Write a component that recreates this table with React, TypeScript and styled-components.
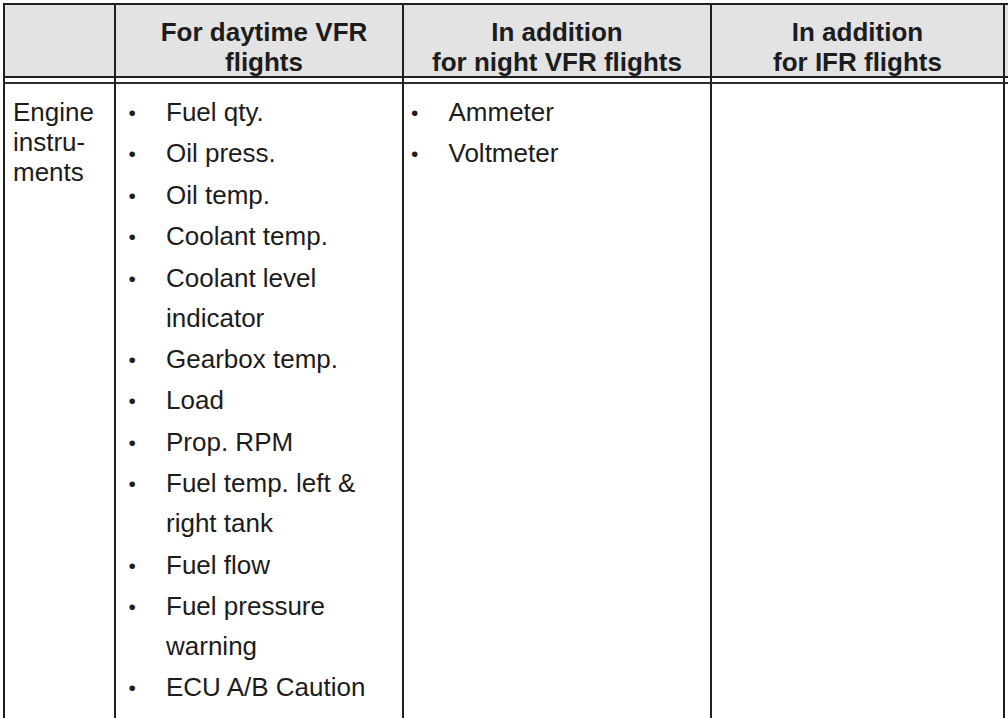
import React from 'react'
import styled, { createGlobalStyle } from 'styled-components'

const Global = createGlobalStyle`
  html, body {
    margin: 0;
    padding: 0;
    background: #fff;
    overflow: hidden;
  }
  body {
    font-family: "Liberation Sans", Arial, sans-serif;
    color: #1c1c1c;
  }
`

const LINE = '#1f1f1f'

const Page = styled.div`
  width: 1008px;
  height: 718px;
  overflow: hidden;
  padding: 3px 0 0 3px;
  box-sizing: border-box;
`

const Table = styled.div`
  display: grid;
  grid-template-columns: 111px 288px 308px 293px 200px;
  grid-template-rows: 73px 4px 700px;
  border-left: 2px solid ${LINE};
  border-top: 2px solid ${LINE};
  width: max-content;
`

const HeadCell = styled.div<{ $shift?: number }>`
  box-sizing: border-box;
  background: #e3e3e3;
  border-right: 2px solid ${LINE};
  border-bottom: 2px solid ${LINE};
  padding: 12px 4px 0 ${p => 4 + (p.$shift || 0)}px;
  font-size: 26px;
  line-height: 30px;
  font-weight: bold;
  text-align: center;
  white-space: nowrap;
`

const GapCell = styled.div`
  border-right: 2px solid ${LINE};
  background: #fff;
`

const BodyCell = styled.div<{ $indent?: number }>`
  box-sizing: border-box;
  border-right: 2px solid ${LINE};
  border-top: 2px solid #2e2e2e;
  padding: 8px 2px 0 ${p => p.$indent || 0}px;
  font-size: 26px;
  line-height: 40px;
`

const RowLabel = styled(BodyCell)`
  padding: 13px 2px 0 8px;
  line-height: 30px;
`

const List = styled.ul`
  list-style: none;
  margin: 0;
  padding: 0;
  display: flex;
  flex-direction: column;
  gap: 1.4px;
`

const Item = styled.li`
  display: flex;
  align-items: flex-start;
`

const Bullet = styled.span`
  flex: 0 0 38.5px;
  box-sizing: border-box;
  height: 40px;
  padding: 2px 0 0 1px;
  font-size: 21px;
  line-height: 38px;
`

const ItemText = styled.span`
  flex: 1;
`

const daytime = [
  'Fuel qty.',
  'Oil press.',
  'Oil temp.',
  'Coolant temp.',
  'Coolant level indicator',
  'Gearbox temp.',
  'Load',
  'Prop. RPM',
  'Fuel temp. left & right tank',
  'Fuel flow',
  'Fuel pressure warning',
  'ECU A/B Caution',
]

const night = ['Ammeter', 'Voltmeter']

function Bullets({ items }: { items: string[] }) {
  return (
    <List>
      {items.map(i => (
        <Item key={i}>
          <Bullet>•</Bullet>
          <ItemText>{i}</ItemText>
        </Item>
      ))}
    </List>
  )
}

export default function App() {
  return (
    <>
      <Global />
      <Page>
        <Table>
          <HeadCell />
          <HeadCell $shift={10}>For daytime VFR<br />flights</HeadCell>
          <HeadCell>In addition<br />for night VFR flights</HeadCell>
          <HeadCell>In addition<br />for IFR flights</HeadCell>
          <HeadCell />

          <GapCell />
          <GapCell />
          <GapCell />
          <GapCell />
          <GapCell />

          <RowLabel>Engine<br />instru-<br />ments</RowLabel>
          <BodyCell $indent={11.5}><Bullets items={daytime} /></BodyCell>
          <BodyCell $indent={6}><Bullets items={night} /></BodyCell>
          <BodyCell />
          <BodyCell />
        </Table>
      </Page>
    </>
  )
}
